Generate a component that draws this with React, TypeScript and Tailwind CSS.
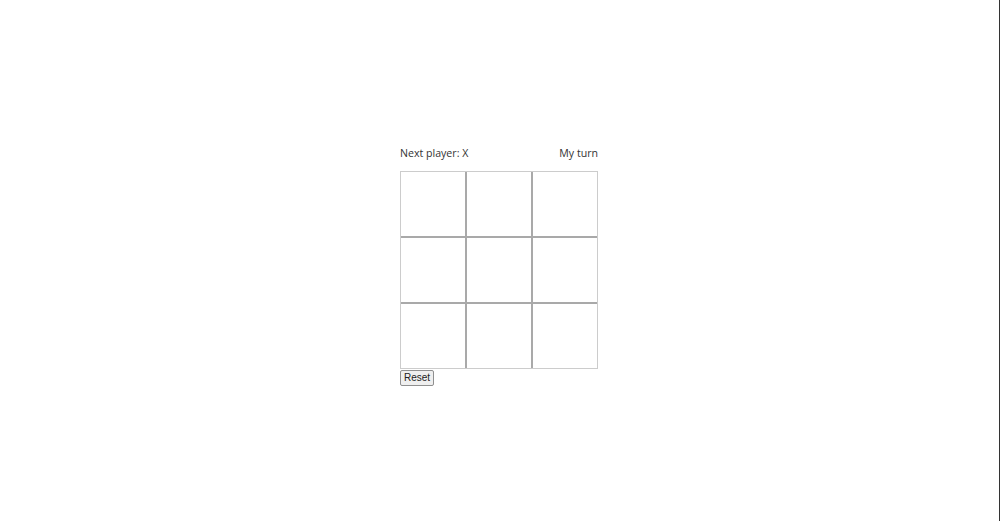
import React, { useState } from "react";

export default function App() {
  const [cells, setCells] = useState<(string | null)[]>(Array(9).fill(null));
  const [xNext, setXNext] = useState(true);

  const click = (i: number) => {
    if (cells[i]) return;
    const next = cells.slice();
    next[i] = xNext ? "X" : "O";
    setCells(next);
    setXNext(!xNext);
  };

  return (
    <div className="w-full h-[521px] bg-white border-r border-[#333] pr-px flex justify-center">
      <div className="w-[198px] mt-[145px] flex flex-col">
        <div
          className="flex justify-between text-[10.6px] leading-[16px] text-[#333] mb-[10px]"
          style={{ fontFamily: '"Open Sans", sans-serif' }}
        >
          <span>Next player: {xNext ? "X" : "O"}</span>
          <span>My turn</span>
        </div>
        <div className="grid grid-cols-[64px_64px_64px] gap-[2px] w-[198px] h-[198px] border border-[#cccccc] bg-[#a9a9a9]">
          {cells.map((c, i) => (
            <button
              key={i}
              onClick={() => click(i)}
              className="w-[64px] h-[64px] bg-white text-2xl"
              style={{ fontFamily: '"Open Sans", sans-serif' }}
            >
              {c}
            </button>
          ))}
        </div>
        <div className="flex mt-px">
          <button
            onClick={() => {
              setCells(Array(9).fill(null));
              setXNext(true);
            }}
            className="h-[16px] px-[3px] text-[10px] leading-[14px] text-[#222] bg-[#efefef] border border-[#8f8f8f] rounded-[2px]"
            style={{ fontFamily: '"Liberation Sans", Arial, sans-serif' }}
          >
            Reset
          </button>
        </div>
      </div>
    </div>
  );
}
